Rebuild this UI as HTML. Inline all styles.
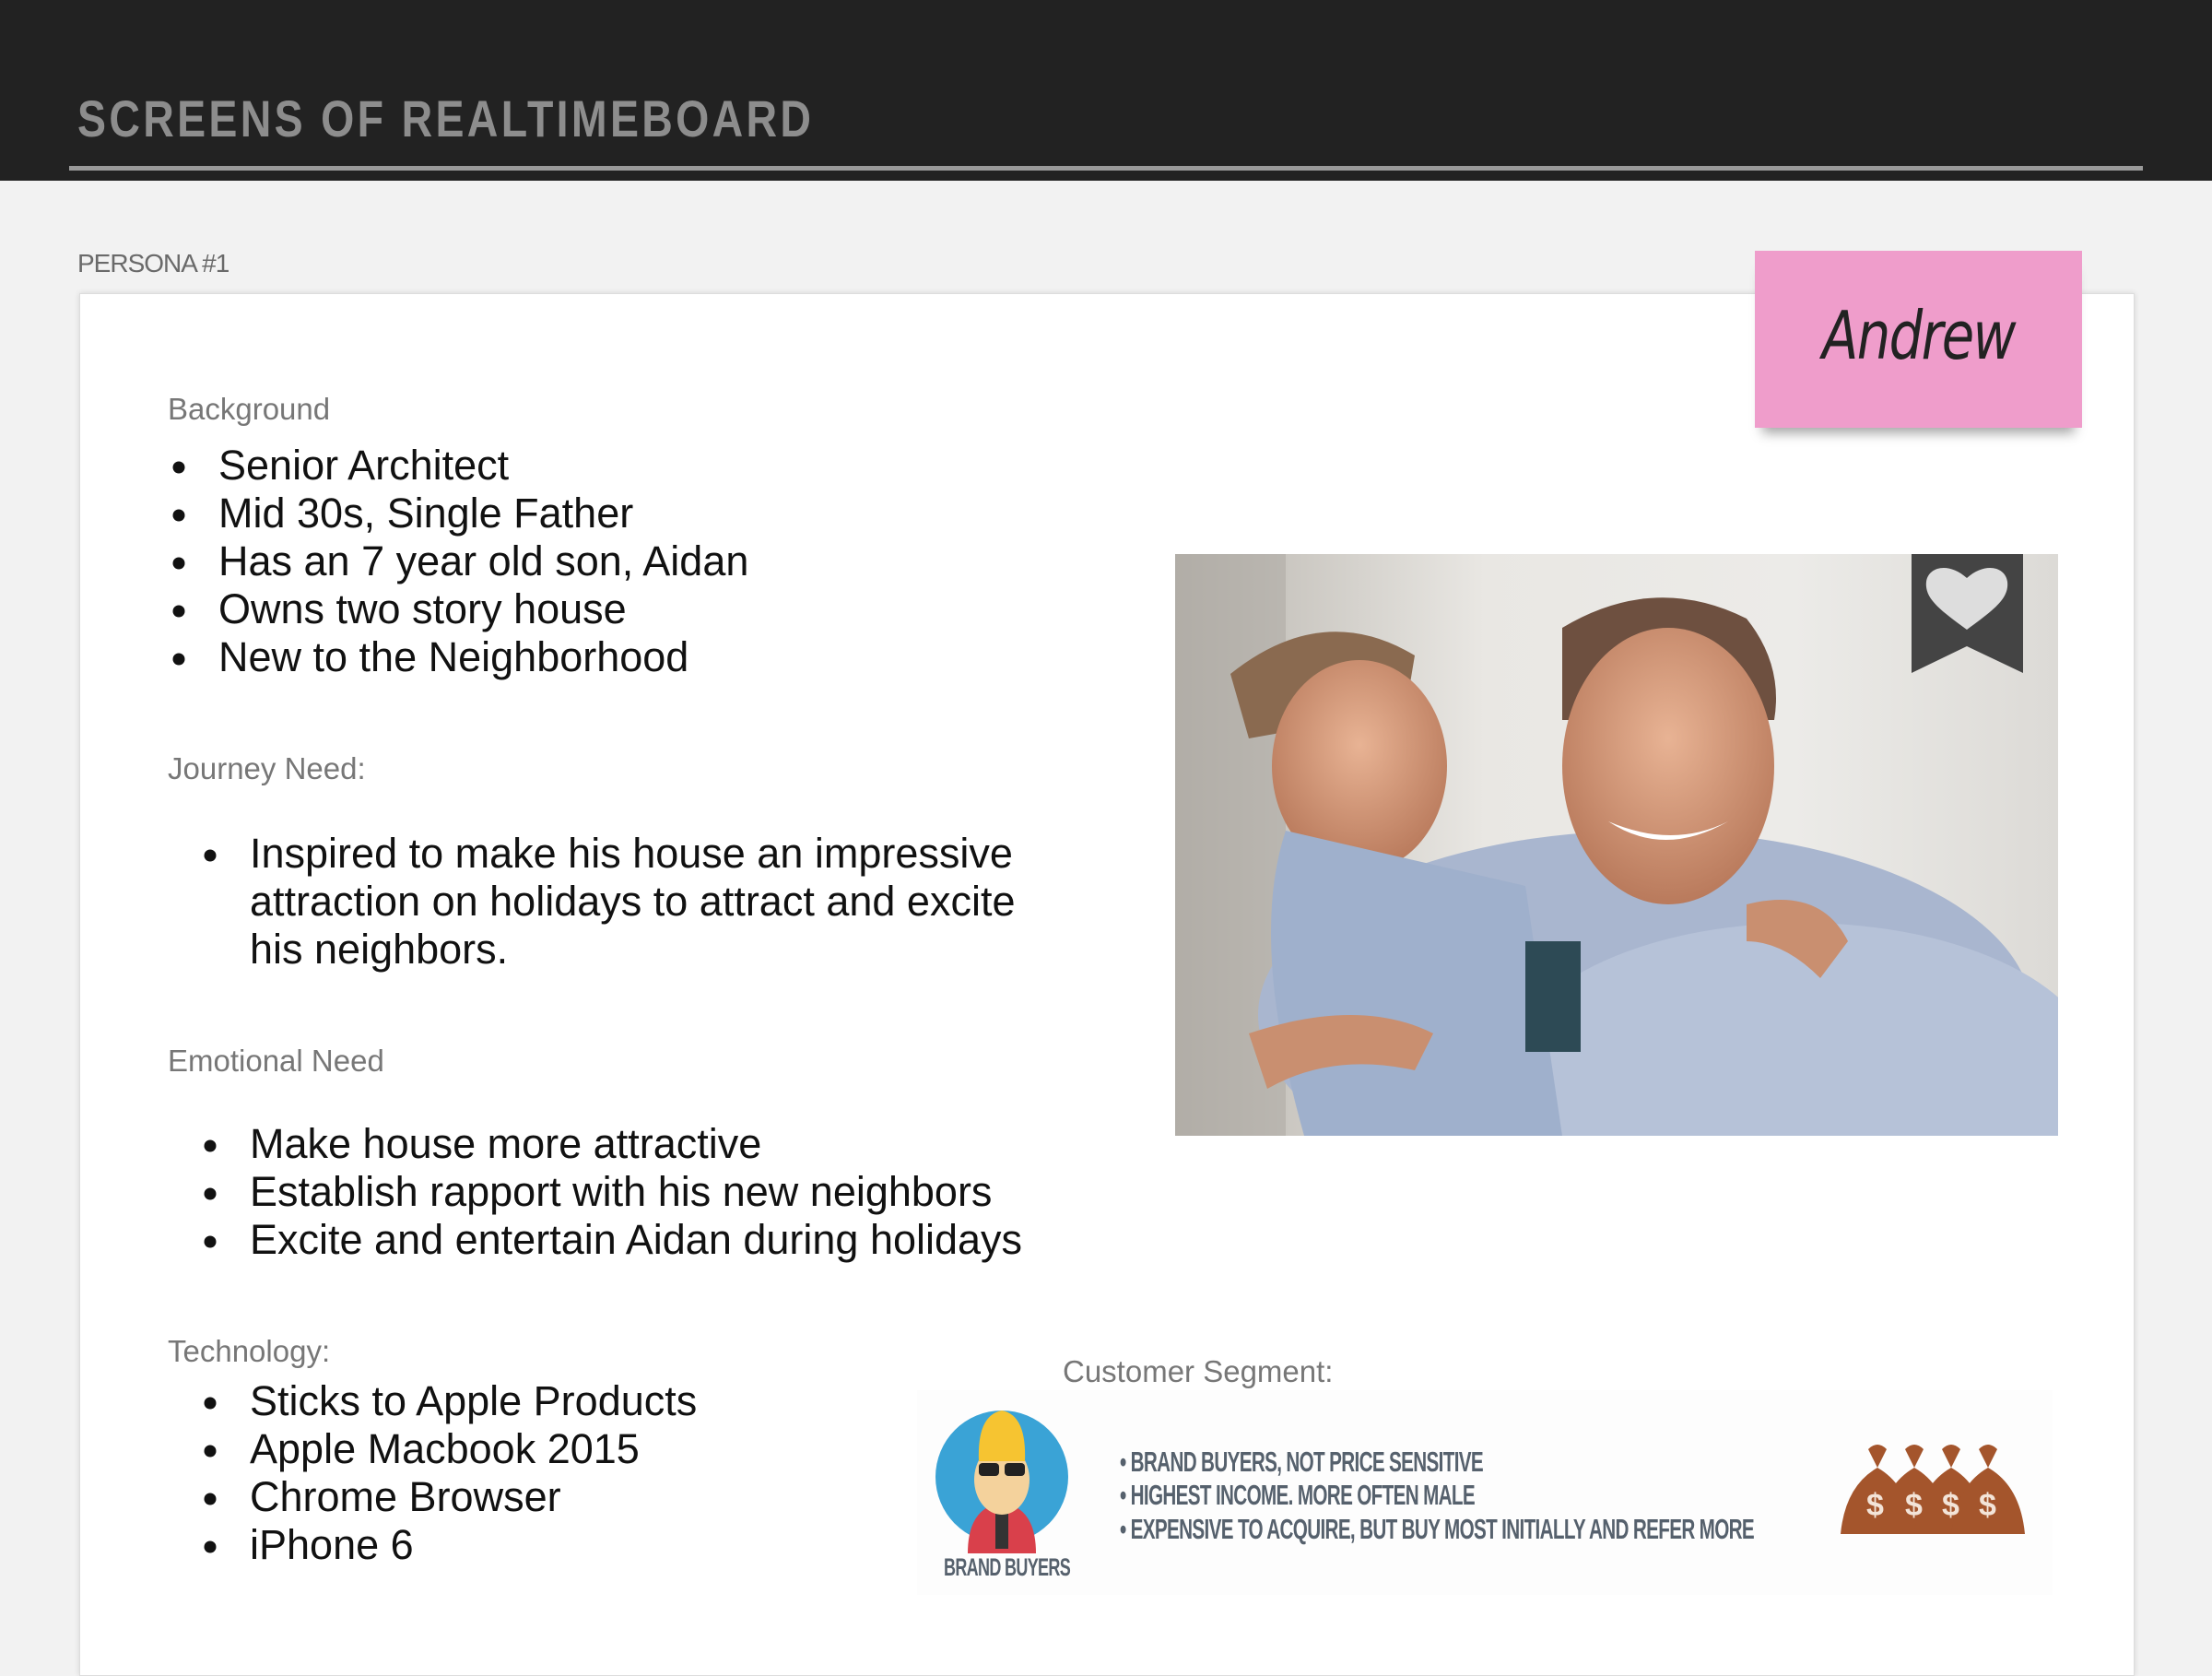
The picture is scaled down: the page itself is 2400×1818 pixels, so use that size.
<!DOCTYPE html>
<html><head><meta charset="utf-8"><style>
*{margin:0;padding:0;box-sizing:border-box}
body{width:2400px;height:1800px;background:#f2f2f2;position:relative;overflow:hidden;font-family:"Liberation Sans",Arial,sans-serif}
.hdr{position:absolute;left:0;top:0;width:2400px;height:196px;background:#222}
.title{position:absolute;left:84px;top:96px;font-size:56px;color:#8d8d8d;letter-spacing:4px;font-weight:bold;transform:scaleX(0.83);transform-origin:left}
.hline{position:absolute;left:75px;top:180px;width:2250px;height:5px;background:#9a9a9a}
.plabel{position:absolute;left:84px;top:270px;font-size:28px;color:#6a6a6a;letter-spacing:-1px}
.card{position:absolute;left:86px;top:318px;width:2230px;height:1500px;background:#fff;border:1px solid #ddd;box-shadow:0 0 6px rgba(0,0,0,.12)}
.h{position:absolute;font-size:33px;color:#777;transform:translateY(-50%)}
.li{position:absolute;font-size:45px;color:#111;transform:translateY(-50%);white-space:nowrap}
.b{position:absolute;width:13px;height:13px;border-radius:50%;background:#111;transform:translate(-50%,-50%)}
.sticky{position:absolute;left:1904px;top:272px;width:355px;height:192px;background:#ef9dcb;box-shadow:0 14px 12px -8px rgba(0,0,0,.35)}
.sticky span{position:absolute;left:0;right:0;top:50px;text-align:center;font-size:72px;color:#222;font-family:"DejaVu Sans",sans-serif;font-style:italic;letter-spacing:-2px;transform:scaleX(.8)}
.photo{position:absolute;left:1275px;top:601px;width:958px;height:631px;overflow:hidden;background:linear-gradient(90deg,#b9b5ae 0%,#e9e7e3 35%,#ecebe8 70%,#dcdad6 100%)}
.seg{position:absolute;font-family:"Liberation Sans",sans-serif;font-weight:bold;color:#56616d;font-size:31px;transform:scaleX(.667);transform-origin:left;white-space:nowrap;letter-spacing:-1px}
</style></head><body>
<div class="hdr"></div>
<div class="title">SCREENS OF REALTIMEBOARD</div>
<div class="hline"></div>
<div class="plabel">PERSONA #1</div>
<div class="card"></div>

<div class="h" style="left:182px;top:444px">Background</div>
<div class="b" style="left:194px;top:507px"></div><div class="li" style="left:237px;top:505px">Senior Architect</div>
<div class="b" style="left:194px;top:559px"></div><div class="li" style="left:237px;top:557px">Mid 30s, Single Father</div>
<div class="b" style="left:194px;top:611px"></div><div class="li" style="left:237px;top:609px">Has an 7 year old son, Aidan</div>
<div class="b" style="left:194px;top:663px"></div><div class="li" style="left:237px;top:661px">Owns two story house</div>
<div class="b" style="left:194px;top:715px"></div><div class="li" style="left:237px;top:713px">New to the Neighborhood</div>

<div class="h" style="left:182px;top:834px">Journey Need:</div>
<div class="b" style="left:228px;top:928px"></div><div class="li" style="left:271px;top:926px">Inspired to make his house an impressive</div>
<div class="li" style="left:271px;top:978px">attraction on holidays to attract and excite</div>
<div class="li" style="left:271px;top:1030px">his neighbors.</div>

<div class="h" style="left:182px;top:1151px">Emotional Need</div>
<div class="b" style="left:228px;top:1243px"></div><div class="li" style="left:271px;top:1241px">Make house more attractive</div>
<div class="b" style="left:228px;top:1295px"></div><div class="li" style="left:271px;top:1293px">Establish rapport with his new neighbors</div>
<div class="b" style="left:228px;top:1347px"></div><div class="li" style="left:271px;top:1345px">Excite and entertain Aidan during holidays</div>

<div class="h" style="left:182px;top:1466px">Technology:</div>
<div class="b" style="left:228px;top:1522px"></div><div class="li" style="left:271px;top:1520px">Sticks to Apple Products</div>
<div class="b" style="left:228px;top:1574px"></div><div class="li" style="left:271px;top:1572px">Apple Macbook 2015</div>
<div class="b" style="left:228px;top:1626px"></div><div class="li" style="left:271px;top:1624px">Chrome Browser</div>
<div class="b" style="left:228px;top:1678px"></div><div class="li" style="left:271px;top:1676px">iPhone 6</div>

<div class="h" style="left:1153px;top:1488px">Customer Segment:</div>

<div class="sticky"><span>Andrew</span></div>

<div class="photo">
<svg width="958" height="631" viewBox="0 0 958 631">
<defs><radialGradient id="sk" cx=".5" cy=".4" r=".6"><stop offset="0" stop-color="#e8b394"/><stop offset="1" stop-color="#b97a5c"/></radialGradient></defs>
<rect x="0" y="0" width="120" height="631" fill="#a9a59f" opacity=".5"/>
<ellipse cx="510" cy="500" rx="420" ry="200" fill="#a9b6cf"/>
<ellipse cx="680" cy="560" rx="320" ry="160" fill="#b6c2d8"/>
<path d="M420 80 Q520 20 620 70 Q660 120 650 180 L420 180 Z" fill="#6e5040"/>
<ellipse cx="535" cy="230" rx="115" ry="150" fill="url(#sk)"/>
<path d="M470 290 Q530 330 600 290 Q540 320 470 290Z" fill="#fff"/>
<path d="M60 130 Q160 50 260 110 L250 170 L80 200Z" fill="#8a6a50"/>
<ellipse cx="200" cy="230" rx="95" ry="115" fill="url(#sk)"/>
<path d="M120 300 Q80 420 140 631 L420 631 L380 360 Z" fill="#9fb0cc"/>
<path d="M80 520 Q200 480 280 520 L260 560 Q170 540 100 580Z" fill="#c98f70"/>
<path d="M620 380 Q700 360 730 420 L700 460 Q660 420 620 420Z" fill="#c98f70"/>
<rect x="380" y="420" width="60" height="120" fill="#2d4a55"/>
</svg>
<svg style="position:absolute;left:799px;top:0" width="121" height="129" viewBox="0 0 121 129"><path d="M0 0H121V129L60 100 0 129Z" fill="#444"/><path d="M60 82 C30 60 14 48 16 30 C18 14 40 8 60 26 C80 8 102 14 104 30 C106 48 90 60 60 82Z" fill="#ddd"/></svg>
</div>

<div style="position:absolute;left:995px;top:1508px;width:1232px;height:222px;background:#fdfdfd"></div>
<svg style="position:absolute;left:1010px;top:1525px" width="160" height="160" viewBox="0 0 160 160">
<circle cx="77" cy="77" r="72" fill="#3aa3d6"/>
<path d="M40 160 Q40 110 77 105 Q114 110 114 160Z" fill="#d9404b"/>
<rect x="70" y="105" width="14" height="50" fill="#333"/>
<ellipse cx="77" cy="80" rx="30" ry="38" fill="#f4d29c"/>
<path d="M52 60 Q50 10 77 5 Q104 10 102 60Z" fill="#f6c431"/>
<rect x="52" y="62" width="22" height="14" rx="4" fill="#222"/><rect x="80" y="62" width="22" height="14" rx="4" fill="#222"/>
</svg>
<div class="seg" style="left:1024px;top:1685px;font-size:27px">BRAND BUYERS</div>
<div class="seg" style="left:1215px;top:1568px">• BRAND BUYERS, NOT PRICE SENSITIVE</div>
<div class="seg" style="left:1215px;top:1604px">• HIGHEST INCOME. MORE OFTEN MALE</div>
<div class="seg" style="left:1215px;top:1641px">• EXPENSIVE TO ACQUIRE, BUT BUY MOST INITIALLY AND REFER MORE</div>
<svg style="position:absolute;left:1997px;top:1562px" width="200" height="105" viewBox="0 0 200 105">
<g fill="#a4552c">
<path d="M0 102 Q5 50 40 30 L30 10 Q40 0 50 10 L40 30 Q75 50 80 102Z"/>
<path d="M40 102 Q45 50 80 30 L70 10 Q80 0 90 10 L80 30 Q115 50 120 102Z"/>
<path d="M80 102 Q85 50 120 30 L110 10 Q120 0 130 10 L120 30 Q155 50 160 102Z"/>
<path d="M120 102 Q125 50 160 30 L150 10 Q160 0 170 10 L160 30 Q195 50 200 102Z"/>
</g>
<g fill="#f3e4d8" font-family="Liberation Sans" font-weight="bold" font-size="34"><text x="28" y="82">$</text><text x="70" y="82">$</text><text x="110" y="82">$</text><text x="150" y="82">$</text></g>
</svg>
</body></html>
